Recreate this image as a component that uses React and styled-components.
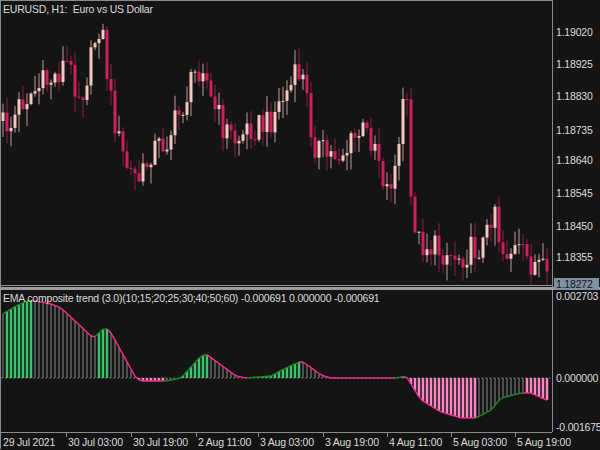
import React from 'react';
import styled, { createGlobalStyle } from 'styled-components';

const Global = createGlobalStyle`
  html, body { margin: 0; padding: 0; background: #141414; }
  body { font-family: "Liberation Sans", Arial, sans-serif; }
`;

const Page = styled.div`
  width: 600px;
  height: 450px;
  background: #141414;
  display: flex;
  flex-direction: column;
  overflow: hidden;
  color: #dcdcdc;
  font-size: 10.5px;
  letter-spacing: -0.2px;
`;

const Pane = styled.div`
  display: flex;
  height: ${(p) => p.h}px;
`;

const Plot = styled.div`
  position: relative;
  width: 552px;
  flex-shrink: 0;
  border-left: 1px solid #8a8a8a;
  border-top: ${(p) => (p.top ? '1px solid #8a8a8a' : 'none')};
  box-sizing: border-box;
`;

const Axis = styled.div`
  position: relative;
  flex: 1;
  border-left: 1px solid #8a8a8a;
`;

const AxisLabel = styled.span`
  position: absolute;
  left: 3px;
  transform: translateY(-50%);
  white-space: nowrap;
`;

const PriceTag = styled.span`
  position: absolute;
  left: 1px;
  right: 1px;
  padding-left: 2px;
  background: #7f91a3;
  color: #10151a;
  transform: translateY(-50%);
`;

const Title = styled.div`
  position: absolute;
  left: 2px;
  top: 2px;
  white-space: nowrap;
  z-index: 1;
`;

const Separator = styled.div`
  height: 3px;
  background: #9c9c9c;
`;

const TimeAxis = styled.div`
  position: relative;
  height: 17px;
  width: 552px;
  border-top: 1px solid #8a8a8a;
  border-left: 1px solid #8a8a8a;
  box-sizing: border-box;
`;

const TimeLabel = styled.span`
  position: absolute;
  top: 3px;
  white-space: nowrap;
`;

const Tick = styled.i`
  position: absolute;
  top: 0;
  width: 1px;
  height: 4px;
  background: #8a8a8a;
`;

const interp = (anchors, x) => {
  for (let i = 0; i < anchors.length - 1; i++) {
    const [x0, y0] = anchors[i];
    const [x1, y1] = anchors[i + 1];
    if (x >= x0 && x <= x1) return y0 + ((y1 - y0) * (x - x0)) / (x1 - x0 || 1);
  }
  return anchors[anchors.length - 1][1];
};

const rnd = (i) => {
  const s = Math.sin(i * 12.9898 + 78.233) * 43758.5453;
  return s - Math.floor(s);
};

const priceAnchors = [
  [0, 120], [10, 125], [20, 100], [40, 85], [55, 75], [65, 60], [80, 95], [90, 60], [97, 22],
  [103, 40], [108, 90], [120, 150], [128, 170], [140, 180], [150, 150], [165, 140], [180, 110],
  [195, 70], [202, 60], [210, 100], [222, 125], [235, 140], [250, 125], [265, 125], [280, 100],
  [290, 85], [300, 68], [306, 100], [312, 140], [325, 155], [345, 150], [360, 130], [375, 140],
  [385, 190], [393, 170], [398, 150], [404, 68], [410, 200], [418, 240], [435, 248], [455, 255],
  [470, 250], [485, 240], [493, 195], [500, 250], [515, 250], [530, 262], [540, 266], [546, 285],
];

const candles = [];
let prev = priceAnchors[0][1];
for (let i = 0; i < 137; i++) {
  const x = 4 * i + 2;
  const close = Math.min(284, interp(priceAnchors, x) + (rnd(i) - 0.5) * 30);
  const open = prev;
  const hi = Math.min(open, close) - rnd(i + 300) * 16;
  const lo = Math.min(284, Math.max(open, close) + rnd(i + 600) * 18);
  candles.push({ x, open, close, hi, lo });
  prev = close;
}

const indAnchors = [
  [0, 315], [15, 306], [28, 300], [40, 302], [50, 304], [60, 308], [75, 322], [90, 336], [95, 337],
  [100, 330], [105, 328], [110, 333], [125, 360], [135, 378], [140, 381], [165, 381], [180, 378],
  [200, 356], [205, 354], [220, 365], [235, 376], [245, 378], [270, 376], [285, 368], [300, 361],
  [305, 364], [320, 375], [330, 378], [395, 378], [405, 376], [410, 384], [420, 400], [440, 412],
  [460, 418], [475, 418], [490, 410], [500, 398], [520, 393], [530, 393], [545, 400],
];
const ZERO = 378 - 290;
const ind = [];
for (let i = 0; i < 137; i++) ind.push(interp(indAnchors, 4 * i + 2) - 290);

const MainChart = () => (
  <svg width="551" height="286" style={{ display: 'block' }}>
    {candles.map((c, i) => {
      const up = c.close < c.open;
      const top = Math.min(c.open, c.close);
      const h = Math.max(1, Math.abs(c.close - c.open));
      return (
        <g key={i}>
          <line x1={c.x} x2={c.x} y1={c.hi} y2={c.lo} stroke={up ? '#b89a94' : '#8f1a45'} />
          <rect x={c.x - 1.5} y={top} width="3" height={h} fill={up ? '#f5c9bf' : '#cc1f5e'} />
        </g>
      );
    })}
    <line x1="0" x2="551" y1="284.5" y2="284.5" stroke="#8d98a3" />
  </svg>
);

const IndicatorChart = () => (
  <svg width="551" height="142" style={{ display: 'block' }}>
    <line x1="0" x2="551" y1={ZERO} y2={ZERO} stroke="#666" strokeDasharray="2 2" />
    {ind.map((y, i) => {
      const rising = i > 0 && y < ind[i - 1];
      const above = y < ZERO;
      let col = '#8a8a8a';
      let w = 1;
      if (above && rising) { col = '#3fc46e'; w = 2.5; }
      if (!above && !rising) { col = '#ff86c4'; w = 2.5; }
      return <line key={i} x1={4 * i + 2} x2={4 * i + 2} y1={ZERO} y2={y} stroke={col} strokeWidth={w} />;
    })}
    {ind.slice(1).map((y, i) => (
      <line
        key={'l' + i}
        x1={4 * i + 2}
        y1={ind[i]}
        x2={4 * i + 6}
        y2={y}
        stroke={y < ind[i] ? '#1e8a24' : '#ff2b8f'}
        strokeWidth="1.4"
      />
    ))}
  </svg>
);

const prices = [
  ['1.19020', 32], ['1.18925', 64], ['1.18830', 96], ['1.18735', 130],
  ['1.18640', 160], ['1.18545', 193], ['1.18450', 226], ['1.18355', 257],
];
const times = [
  ['29 Jul 2021', 0], ['30 Jul 03:00', 65], ['30 Jul 19:00', 130], ['2 Aug 11:00', 195],
  ['3 Aug 03:00', 257], ['3 Aug 19:00', 322], ['4 Aug 11:00', 386],
  ['5 Aug 03:00', 450], ['5 Aug 19:00', 514],
];

export default function App() {
  return (
    <Page>
      <Global />
      <Pane h={287}>
        <Plot top>
          <Title>EURUSD, H1:&nbsp; Euro vs US Dollar</Title>
          <MainChart />
        </Plot>
        <Axis>
          {prices.map(([p, y]) => (
            <AxisLabel key={p} style={{ top: y }}>{p}</AxisLabel>
          ))}
          <PriceTag style={{ top: 284 }}>1.18272</PriceTag>
        </Axis>
      </Pane>
      <Separator />
      <Pane h={142}>
        <Plot>
          <Title>EMA composite trend (3.0)(10;15;20;25;30;40;50;60) -0.000691 0.000000 -0.000691</Title>
          <IndicatorChart />
        </Plot>
        <Axis>
          <AxisLabel style={{ top: 6 }}>0.002703</AxisLabel>
          <AxisLabel style={{ top: ZERO }}>0.000000</AxisLabel>
          <AxisLabel style={{ top: 137 }}>-0.001675</AxisLabel>
        </Axis>
      </Pane>
      <TimeAxis>
        {times.map(([t, tx]) => (
          <React.Fragment key={t}>
            {tx > 0 && <Tick style={{ left: tx }} />}
            <TimeLabel style={{ left: tx + 2 }}>{t}</TimeLabel>
          </React.Fragment>
        ))}
      </TimeAxis>
    </Page>
  );
}
